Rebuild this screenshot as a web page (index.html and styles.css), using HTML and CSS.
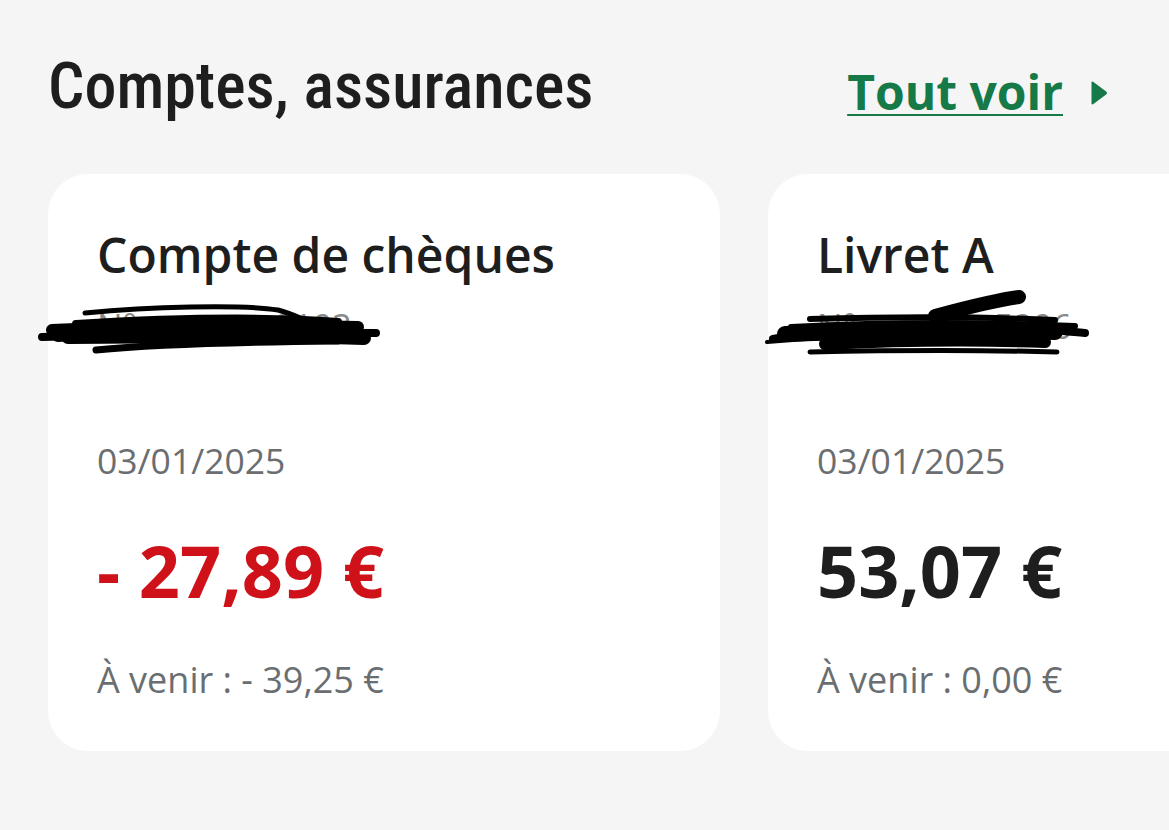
FILE: index.html
```html
<!DOCTYPE html>
<html lang="fr">
<head>
<meta charset="utf-8">
<title>Comptes, assurances</title>
<link rel="stylesheet" href="styles.css">
</head>
<body>
<section class="section">
  <header class="head">
    <h2 class="head-title">Comptes, assurances</h2>
    <a class="see-all" href="#"><span class="see-all-text">Tout voir</span>
      <svg class="see-all-icon" width="16" height="24" viewBox="0 0 16 24"><path d="M1.5 1.5 L14.5 11.2 Q15.5 12 14.5 12.8 L1.5 22.5 Z" fill="#157a47" stroke="#157a47" stroke-width="2" stroke-linejoin="round"/></svg>
    </a>
  </header>
  <div class="cards">
    <article class="card">
      <h3 class="card-title">Compte de chèques</h3>
      <div class="card-number">
        <span class="card-number-text">N° ••••••••••2103</span>
        <svg class="scribble scribble-1" width="360" height="70" viewBox="0 0 360 70">
          <g fill="none" stroke="#000" stroke-linecap="round" stroke-linejoin="round">
            <path d="M47 27 C110 21 200 18 240 24 C256 28 265 34 282 40" stroke-width="5"/>
            <path d="M38 38 C120 33 220 30 300 36" stroke-width="8"/>
            <path d="M14 44 C100 40 200 38 320 41" stroke-width="12"/>
            <path d="M4 51 C110 48 230 46 338 47" stroke-width="8"/>
            <path d="M30 51 C120 50 250 50 326 52" stroke-width="14"/>
            <path d="M58 64 C120 58 200 56 300 55" stroke-width="7"/>
            <path d="M20 49 C100 42 200 40 310 48" stroke-width="14"/>
          </g>
        </svg>
      </div>
      <p class="card-date">03/01/2025</p>
      <p class="card-amount card-amount-neg">- 27,89 €</p>
      <p class="card-upcoming">À venir : - 39,25 €</p>
    </article>
    <article class="card">
      <h3 class="card-title">Livret A</h3>
      <div class="card-number">
        <span class="card-number-text">N° ••••••••••5206</span>
        <svg class="scribble scribble-2" width="330" height="80" viewBox="0 0 330 80">
          <g fill="none" stroke="#000" stroke-linecap="round" stroke-linejoin="round">
            <path d="M170 34 C200 26 230 18 254 15" stroke-width="14"/>
            <path d="M45 37 C120 35 200 34 290 38" stroke-width="6"/>
            <path d="M26 45 C120 40 220 40 310 44" stroke-width="6"/>
            <path d="M8 57 C60 47 140 44 250 45 C280 46 300 50 320 51" stroke-width="8"/>
            <path d="M20 52 C120 48 220 48 290 50" stroke-width="16"/>
            <path d="M60 62 C140 58 220 58 280 60" stroke-width="12"/>
            <path d="M45 70 C140 68 220 68 292 70" stroke-width="5"/>
            <path d="M2 60 C50 56 90 54 140 54" stroke-width="4"/>
          </g>
        </svg>
      </div>
      <p class="card-date">03/01/2025</p>
      <p class="card-amount">53,07 €</p>
      <p class="card-upcoming">À venir : 0,00 €</p>
    </article>
  </div>
</section>
</body>
</html>
```

FILE: styles.css
```css
html, body {
  margin: 0;
  padding: 0;
}
body {
  background: #f5f5f5;
  font-family: "Open Sans", "Liberation Sans", sans-serif;
  overflow: hidden;
  width: 1169px;
  height: 830px;
}
.section {
  padding: 55px 0 0 0;
}
.head {
  display: flex;
  align-items: flex-start;
  justify-content: space-between;
  padding: 0 62px 0 48px;
}
.head-title {
  margin: 0;
  font-family: "Roboto", "Open Sans", sans-serif;
  font-stretch: 87.5%;
  font-weight: 500;
  font-size: 64px;
  line-height: 1;
  color: #1e1e1e;
}
.see-all {
  display: flex;
  align-items: center;
  gap: 28px;
  text-decoration: none;
  margin-top: 13px;
}
.see-all-text {
  font-weight: 700;
  font-size: 48px;
  line-height: 1;
  color: #157a47;
  text-decoration: underline;
  text-decoration-thickness: 2px;
  text-underline-offset: 4px;
}
.see-all-icon {
  display: block;
  margin-top: 1px;
}
.cards {
  display: flex;
  gap: 48px;
  padding-left: 48px;
  margin-top: 55px;
}
.card {
  flex: 0 0 672px;
  box-sizing: border-box;
  height: 577px;
  background: #ffffff;
  border-radius: 40px;
  padding: 57px 49px 0 49px;
  display: flex;
  flex-direction: column;
}
.card-title {
  margin: 0;
  font-weight: 600;
  font-size: 48px;
  line-height: 1;
  color: #1e1e1e;
}
.card-number {
  position: relative;
  height: 40px;
  margin-top: 27px;
}
.card-number-text {
  font-size: 34px;
  line-height: 40px;
  color: #8a8a8a;
}
.scribble {
  position: absolute;
  left: -59px;
  top: -20px;
}
.scribble-2 {
  left: -52px;
  top: -24px;
}
.card-date {
  margin: 97px 0 0 0;
  font-size: 35.5px;
  line-height: 1;
  color: #6a6e71;
}
.card-amount {
  margin: 55px 0 0 0;
  font-weight: 700;
  font-size: 72px;
  line-height: 1;
  color: #1e1e1e;
}
.card-amount-neg {
  color: #cf1219;
}
.card-upcoming {
  margin: 56px 0 0 0;
  font-size: 36px;
  line-height: 1;
  color: #6a6e71;
}
```
